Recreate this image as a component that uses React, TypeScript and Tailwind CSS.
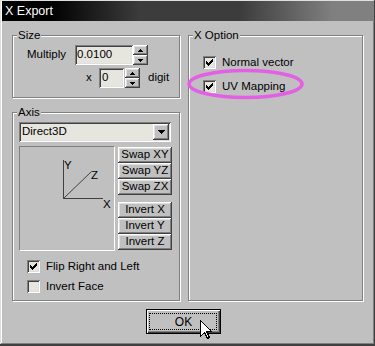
import React from "react";

const RAISED =
  "shadow-[inset_-1px_-1px_0_#404040,inset_1px_1px_0_#fff,inset_-2px_-2px_0_#808080,inset_2px_2px_0_#dfdfdf] bg-[#c0c0c0]";
const SUNKEN =
  "shadow-[inset_1px_1px_0_#808080,inset_-1px_-1px_0_#fff,inset_2px_2px_0_#404040,inset_-2px_-2px_0_#dfdfdf] bg-[#e6e6de]";

function Check({ checked }: { checked: boolean }) {
  const cols: [number, number][] = [
    [3, 5],
    [4, 6],
    [5, 7],
    [6, 6],
    [7, 5],
    [8, 4],
    [9, 3],
  ];
  return (
    <div className={"relative w-[13px] h-[13px] shrink-0 " + SUNKEN}>
      {checked && (
        <svg width="13" height="13" className="absolute left-0 top-0" shapeRendering="crispEdges">
          {cols.map(([x, y]) => (
            <rect key={x} x={x} y={y} width="1" height="3" fill="#000" />
          ))}
        </svg>
      )}
    </div>
  );
}

function Arrow({ up }: { up: boolean }) {
  return (
    <svg width="5" height="3" shapeRendering="crispEdges">
      {up ? (
        <>
          <rect x="2" y="0" width="1" height="1" fill="#000" />
          <rect x="1" y="1" width="3" height="1" fill="#000" />
          <rect x="0" y="2" width="5" height="1" fill="#000" />
        </>
      ) : (
        <>
          <rect x="0" y="0" width="5" height="1" fill="#000" />
          <rect x="1" y="1" width="3" height="1" fill="#000" />
          <rect x="2" y="2" width="1" height="1" fill="#000" />
        </>
      )}
    </svg>
  );
}

function Spinner() {
  return (
    <div className="flex flex-col w-[15px] h-[20px] shrink-0">
      <div className={"h-[10px] flex items-center justify-center " + RAISED}>
        <Arrow up />
      </div>
      <div className={"h-[10px] flex items-center justify-center " + RAISED}>
        <Arrow up={false} />
      </div>
    </div>
  );
}

function Group({
  label,
  className,
  children,
}: {
  label: string;
  className: string;
  children?: React.ReactNode;
}) {
  return (
    <div
      className={
        "relative border border-[#808080] shadow-[inset_1px_1px_0_#fff,1px_1px_0_#fff] " + className
      }
    >
      <span className="absolute left-[4px] top-[-8px] bg-[#c0c0c0] px-[1px] leading-[14px] whitespace-nowrap">
        {label}
      </span>
      {children}
    </div>
  );
}

function Btn({ label }: { label: string }) {
  return (
    <div className={"w-[54px] h-[16px] flex items-center justify-center leading-none " + RAISED}>
      {label}
    </div>
  );
}

function CheckRow({ checked, label }: { checked: boolean; label: string }) {
  return (
    <div className="flex items-center h-[13px] gap-[6px]">
      <Check checked={checked} />
      <span className="leading-none whitespace-nowrap">{label}</span>
    </div>
  );
}

export default function App() {
  return (
    <div className="w-[375px] h-[346px] bg-[#404040] font-['Liberation_Sans',Arial,sans-serif] text-[11.5px] text-black">
      <div className="relative w-[375px] h-[345px] bg-[#c0c0c0] shadow-[inset_-1px_-1px_0_#404040,inset_1px_1px_0_#dfdfdf,inset_-2px_-2px_0_#808080,inset_2px_2px_0_#fff] pt-[1px] px-[2px] flex flex-col">
        {/* Title bar */}
        <div className="h-[20px] flex items-center pl-[3px] text-white text-[12.5px] bg-[linear-gradient(to_right,#000_0px,#000_48px,#3c3c3c_138px,#3c3c3c_238px,#808080_331px,#808080_371px)]">
          X Export
        </div>

        {/* Body */}
        <div className="flex mt-[14px] ml-[10px] gap-[8px]">
          {/* Left column */}
          <div className="flex flex-col w-[168px]">
            <Group label="Size" className="h-[63px] flex flex-col pt-[9px]">
              <div className="flex items-center pl-[14px] h-[20px]">
                <span className="w-[48px] leading-none">Multiply</span>
                <div className={"w-[58px] h-[20px] flex items-center pl-[2px] leading-none " + SUNKEN}>
                  0.0100
                </div>
                <Spinner />
              </div>
              <div className="flex items-center pl-[73px] h-[20px] mt-[3px]">
                <span className="w-[13px] leading-none">x</span>
                <div className={"w-[25px] h-[20px] flex items-center pl-[3px] leading-none " + SUNKEN}>0</div>
                <div className="ml-[1px]">
                  <Spinner />
                </div>
                <span className="ml-[8px] leading-none">digit</span>
              </div>
            </Group>

            <Group label="Axis" className="mt-[14px] h-[189px] flex flex-col pt-[9px] pl-[6px]">
              <div className={"w-[152px] h-[20px] flex items-center justify-between pl-[3px] pr-[2px] " + SUNKEN}>
                <span className="leading-none">Direct3D</span>
                <div className={"w-[16px] h-[16px] flex items-center justify-center " + RAISED}>
                  <svg width="7" height="4" shapeRendering="crispEdges">
                    <rect x="0" y="0" width="7" height="1" fill="#000" />
                    <rect x="1" y="1" width="5" height="1" fill="#000" />
                    <rect x="2" y="2" width="3" height="1" fill="#000" />
                    <rect x="3" y="3" width="1" height="1" fill="#000" />
                  </svg>
                </div>
              </div>
              <div className="flex mt-[4px] gap-[3px]">
                <div className="relative w-[96px] h-[105px] border border-t-[#808080] border-l-[#808080] border-b-white border-r-white">
                  <svg
                    width="94"
                    height="103"
                    className="absolute left-0 top-0"
                    fontFamily="'Liberation Sans', Arial, sans-serif"
                    fontSize="11.5"
                  >
                    <g shapeRendering="crispEdges" fill="#404040">
                      <rect x="43" y="13" width="1" height="39" />
                      <rect x="43" y="51" width="40" height="1" />
                    </g>
                    <line x1="43.5" y1="51.5" x2="71.5" y2="24.5" stroke="#404040" strokeWidth="1" />
                    <text x="44" y="22" fill="#000">Y</text>
                    <text x="71" y="32" fill="#000">Z</text>
                    <text x="83" y="61" fill="#000">X</text>
                  </svg>
                </div>
                <div className="flex flex-col pt-[1px]">
                  <Btn label="Swap XY" />
                  <Btn label="Swap YZ" />
                  <Btn label="Swap ZX" />
                  <div className="h-[7px]" />
                  <Btn label="Invert X" />
                  <Btn label="Invert Y" />
                  <Btn label="Invert Z" />
                </div>
              </div>
              <div className="flex flex-col pl-[8px] mt-[9px] gap-[7px]">
                <CheckRow checked label="Flip Right and Left" />
                <CheckRow checked={false} label="Invert Face" />
              </div>
            </Group>
          </div>

          {/* Right group */}
          <Group label="X Option" className="w-[175px] h-[266px] flex flex-col pt-[20px] pl-[14px] gap-[11px]">
            <CheckRow checked label="Normal vector" />
            <CheckRow checked label="UV Mapping" />
          </Group>
        </div>

        {/* OK button */}
        <div className="mt-[8px] ml-[144px]">
          <div className="relative w-[75px] h-[25px] border border-black bg-[#c0c0c0] shadow-[inset_1px_1px_0_#fff,inset_-1px_-1px_0_#404040,inset_-2px_-2px_0_#808080] flex items-center justify-center">
            <div className="absolute left-[2px] top-[3px] right-[3px] bottom-[3px] border border-dotted border-black" />
            <span className="leading-none text-[12px]">OK</span>
          </div>
        </div>

        {/* Magenta annotation ellipse */}
        <svg width="124" height="36" className="absolute left-[184px] top-[66px] pointer-events-none">
          <ellipse cx="61.5" cy="18" rx="56.5" ry="13.5" fill="none" stroke="#e35fe3" strokeWidth="3.5" />
        </svg>

        {/* Mouse cursor */}
        <svg width="13" height="20" className="absolute left-[200px] top-[320px] pointer-events-none">
          <path
            d="M0.5 0.5 L0.5 16.5 L4.5 12.5 L7.5 18.5 L9.5 17.5 L6.5 11.5 L11.5 11.5 Z"
            fill="#fff"
            stroke="#000"
            strokeWidth="1"
            shapeRendering="crispEdges"
          />
        </svg>
      </div>
    </div>
  );
}
